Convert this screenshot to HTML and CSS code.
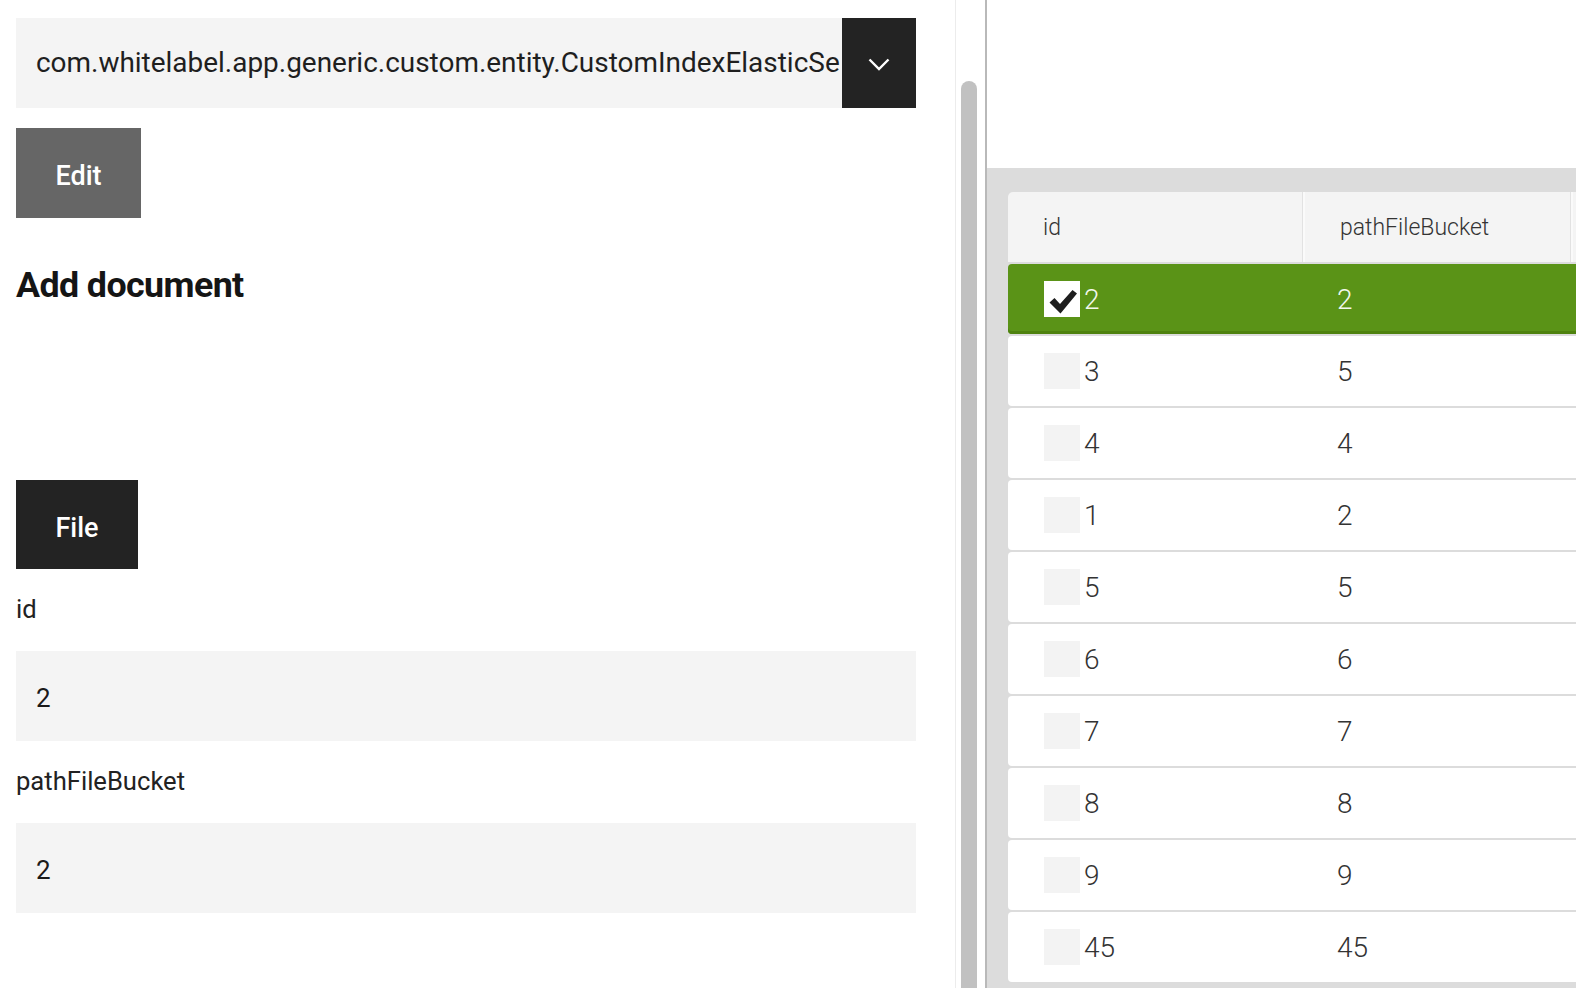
FILE: index.html
```html
<!DOCTYPE html>
<html>
<head>
<meta charset="utf-8">
<link rel="stylesheet" href="styles.css">
</head>
<body>
<div class="app">
  <main class="left">
    <div class="select">
      <div class="select-text">com.whitelabel.app.generic.custom.entity.CustomIndexElasticSe</div>
      <div class="select-btn">
        <svg width="22" height="13" viewBox="0 0 22 13"><path d="M1.5 1.5 L11 11 L20.5 1.5" fill="none" stroke="#fff" stroke-width="2.4"/></svg>
      </div>
    </div>
    <button class="btn btn-edit">Edit</button>
    <h2 class="heading">Add document</h2>
    <button class="btn btn-file">File</button>
    <label class="field-label">id</label>
    <div class="input">2</div>
    <label class="field-label">pathFileBucket</label>
    <div class="input">2</div>
  </main>
  <div class="scrollbar"><div class="thumb"></div></div>
  <section class="right">
    <div class="right-top"></div>
    <div class="grid-area">
      <div class="table">
        <div class="thead">
          <div class="th c1">id</div>
          <div class="th c2">pathFileBucket</div>
          <div class="th c3"></div>
        </div>
        <div class="tr selected">
          <div class="td c1"><span class="cb checked"><svg width="36" height="36" viewBox="0 0 36 36"><path d="M5.5 21.5 L10.5 17 L16 23 L28.5 9 L33 12.5 L16.5 32.5 Z" fill="#1e1e1e"/></svg></span>2</div>
          <div class="td c2">2</div>
          <div class="td c3"></div>
        </div>
        <div class="tr"><div class="td c1"><span class="cb"></span>3</div><div class="td c2">5</div><div class="td c3"></div></div>
        <div class="tr"><div class="td c1"><span class="cb"></span>4</div><div class="td c2">4</div><div class="td c3"></div></div>
        <div class="tr"><div class="td c1"><span class="cb"></span>1</div><div class="td c2">2</div><div class="td c3"></div></div>
        <div class="tr"><div class="td c1"><span class="cb"></span>5</div><div class="td c2">5</div><div class="td c3"></div></div>
        <div class="tr"><div class="td c1"><span class="cb"></span>6</div><div class="td c2">6</div><div class="td c3"></div></div>
        <div class="tr"><div class="td c1"><span class="cb"></span>7</div><div class="td c2">7</div><div class="td c3"></div></div>
        <div class="tr"><div class="td c1"><span class="cb"></span>8</div><div class="td c2">8</div><div class="td c3"></div></div>
        <div class="tr"><div class="td c1"><span class="cb"></span>9</div><div class="td c2">9</div><div class="td c3"></div></div>
        <div class="tr"><div class="td c1"><span class="cb"></span>45</div><div class="td c2">45</div><div class="td c3"></div></div>
      </div>
    </div>
  </section>
</div>
</body>
</html>
```
FILE: styles.css
```css
* { box-sizing: border-box; }
html, body { margin: 0; padding: 0; background: #fff; }
body { font-family: Roboto, "Liberation Sans", sans-serif; color: #222; }
.app { display: flex; width: 1576px; height: 988px; overflow: hidden; }

.left { width: 955px; flex: none; padding: 18px 0 0 16px; display: flex; flex-direction: column; align-items: flex-start; }

.select { width: 900px; height: 90px; background: #f4f4f4; display: flex; align-items: stretch; }
.select-text { flex: 1; min-width: 0; white-space: nowrap; font-size: 27.95px; line-height: 90px; padding-left: 20px; color: #1f1f1f; }
.select-btn { width: 74px; flex: none; background: #232323; display: flex; align-items: center; justify-content: center; }
.select-btn svg { display: block; margin-top: 2px; }

.btn { border: 0; margin: 0; padding: 6px 0 0 0; font-family: Roboto, "Liberation Sans", sans-serif; font-size: 27px; font-weight: 500; color: #fff; height: 90px; display: flex; align-items: center; justify-content: center; }
.btn-edit { width: 125px; background: #666; margin-top: 20px; }
.btn-file { width: 122px; background: #232323; margin-top: 174px; height: 89px; }

.heading { margin: 46px 0 0 0; font-size: 35.8px; line-height: 42px; font-weight: 700; letter-spacing: -0.6px; color: #151515; }

.field-label { display: block; font-size: 25.6px; line-height: 31px; margin-top: 25px; color: #222; }
.input { width: 900px; height: 90px; margin-top: 26px; background: #f4f4f4; font-size: 26px; padding: 4px 0 0 20px; display: flex; align-items: center; color: #1a1a1a; }

.scrollbar { width: 32px; flex: none; border-left: 1px solid #ececec; border-right: 2px solid #b9b9b9; padding-top: 81px; padding-left: 5px; }
.thumb { width: 16px; height: 100%; background: #c1c1c1; border-radius: 8px 8px 0 0; }

.right { flex: 1; min-width: 0; display: flex; flex-direction: column; }
.right-top { height: 168px; flex: none; background: #fff; }
.grid-area { flex: 1; background: #dcdcdc; padding: 24px 0 0 21px; overflow: hidden; }
.table { width: 800px; display: flex; flex-direction: column; gap: 2px; }

.thead { display: flex; height: 70px; }
.th { background: #f4f4f4; font-size: 23px; font-weight: 300; color: #333; display: flex; align-items: center; padding-left: 35px; }
.thead .c1 { width: 297px; border-radius: 5px 0 0 0; border-right: 2px solid #fafafa; box-shadow: inset -1px 0 #e2e2e2; }
.thead .c2 { width: 268px; border-right: 2px solid #fafafa; box-shadow: inset -1px 0 #e2e2e2; }
.thead .c3 { flex: 1; }

.tr { display: flex; height: 70px; background: #fff; border-radius: 4px 0 0 4px; }
.td { font-size: 28px; font-weight: 300; color: #333; display: flex; align-items: center; }
.tr .c1 { width: 294px; padding-left: 36px; }
.tr .c2 { width: 268px; padding-left: 35px; }
.tr .c3 { flex: 1; }
.cb { width: 36px; height: 36px; background: #f3f3f3; margin-right: 4px; flex: none; }
.cb svg { display: block; }

.tr.selected { background: #5a9317; box-shadow: inset 0 -3px #4e820f; }
.tr.selected .td { color: #f2f8ec; }
.cb.checked { background: #fff; }
```
